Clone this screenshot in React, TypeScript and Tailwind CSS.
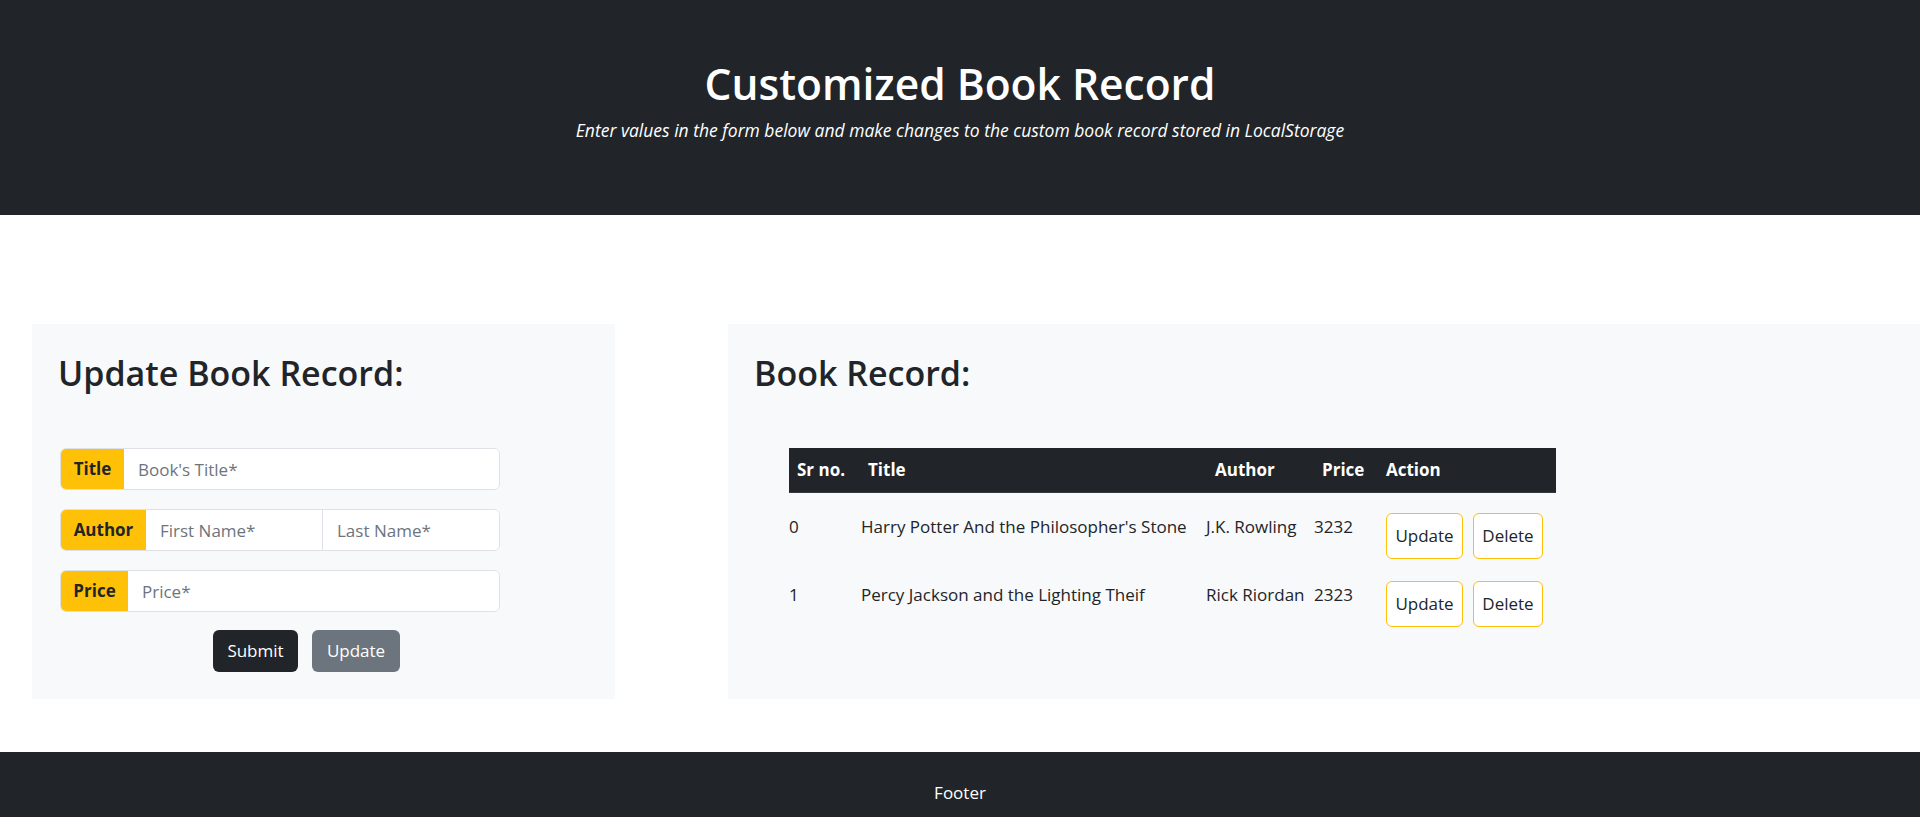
import React from "react";

const books = [
  { id: 0, title: "Harry Potter And the Philosopher's Stone", author: "J.K. Rowling", price: "3232" },
  { id: 1, title: "Percy Jackson and the Lighting Theif", author: "Rick Riordan", price: "2323" },
];

function Group({ label, labelW, children }: { label: string; labelW: string; children: React.ReactNode }) {
  return (
    <div className="flex h-[42px] w-[440px] overflow-hidden rounded-[6px] border border-[#dee2e6] bg-white">
      <div className={`${labelW} flex shrink-0 items-center justify-center bg-[#ffc107] font-bold text-[#212529]`}>{label}</div>
      {children}
    </div>
  );
}

const inputCls =
  "h-full min-w-0 flex-1 bg-white pl-[14px] text-[17px] text-[#212529] outline-none placeholder:text-[#6c757d]";

export default function App() {
  return (
    <div className="flex h-[817px] flex-col overflow-hidden bg-white font-['Open_Sans',sans-serif] text-[17px] leading-[24px] text-[#212529]">
      <header className="flex h-[215px] shrink-0 flex-col items-center bg-[#212529] pt-[58px] text-white">
        <h1 className="text-[42.5px] font-semibold leading-[52px]">Customized Book Record</h1>
        <p className="mt-[8px] text-[17.5px] italic leading-[24px]">
          Enter values in the form below and make changes to the custom book record stored in LocalStorage
        </p>
      </header>

      <main className="flex h-[537px] shrink-0 pt-[109px]">
        <section className="ml-[32px] h-[375px] w-[583px] shrink-0 bg-[#f8f9fa] pl-[28px] pt-[28px]">
          <h2 className="-ml-[2px] text-[34px] font-semibold leading-[42px]">Update Book Record:</h2>
          <div className="mt-[54px] flex flex-col gap-[19px]">
            <Group label="Title" labelW="w-[63px]">
              <input className={inputCls} placeholder="Book's Title*" />
            </Group>
            <Group label="Author" labelW="w-[85px]">
              <input className={inputCls} placeholder="First Name*" />
              <input className={`${inputCls} border-l border-[#dee2e6]`} placeholder="Last Name*" />
            </Group>
            <Group label="Price" labelW="w-[67px]">
              <input className={inputCls} placeholder="Price*" />
            </Group>
          </div>
          <div className="ml-[153px] mt-[18px] flex gap-[14px]">
            <button className="h-[42px] w-[85px] rounded-[6px] bg-[#212529] text-white">Submit</button>
            <button className="h-[42px] w-[88px] rounded-[6px] bg-[#6c757d] text-white">Update</button>
          </div>
        </section>

        <section className="ml-[113px] h-[375px] flex-1 bg-[#f8f9fa] pl-[26px] pt-[28px]">
          <h2 className="text-[34px] font-semibold leading-[42px]">Book Record:</h2>
          <div className="ml-[35px] mt-[54px] w-[767px]">
            <div className="grid h-[45px] grid-cols-[72px_345px_108px_72px_170px] items-center border-b border-[#373b3e] bg-[#212529] font-bold text-white">
              <div className="pl-[8px]">Sr no.</div>
              <div className="pl-[7px]">Title</div>
              <div className="pl-[9px]">Author</div>
              <div className="pl-[8px]">Price</div>
              <div>Action</div>
            </div>
            {books.map((b) => (
              <div key={b.id} className="grid h-[68px] grid-cols-[72px_345px_108px_72px_170px] items-start">
                <div className="pt-[22px]">{b.id}</div>
                <div className="pt-[22px]">{b.title}</div>
                <div className="pt-[22px]">{b.author}</div>
                <div className="pt-[22px]">{b.price}</div>
                <div className="flex gap-[10px] pt-[20px]">
                  <button className="h-[46px] w-[77px] rounded-[6px] border border-[#ffc107] bg-white text-[#212529]">Update</button>
                  <button className="h-[46px] w-[70px] rounded-[6px] border border-[#ffc107] bg-white text-[#212529]">Delete</button>
                </div>
              </div>
            ))}
          </div>
        </section>
      </main>

      <footer className="h-[65px] shrink-0 bg-[#212529] pt-[29px] text-center text-white">Footer</footer>
    </div>
  );
}
